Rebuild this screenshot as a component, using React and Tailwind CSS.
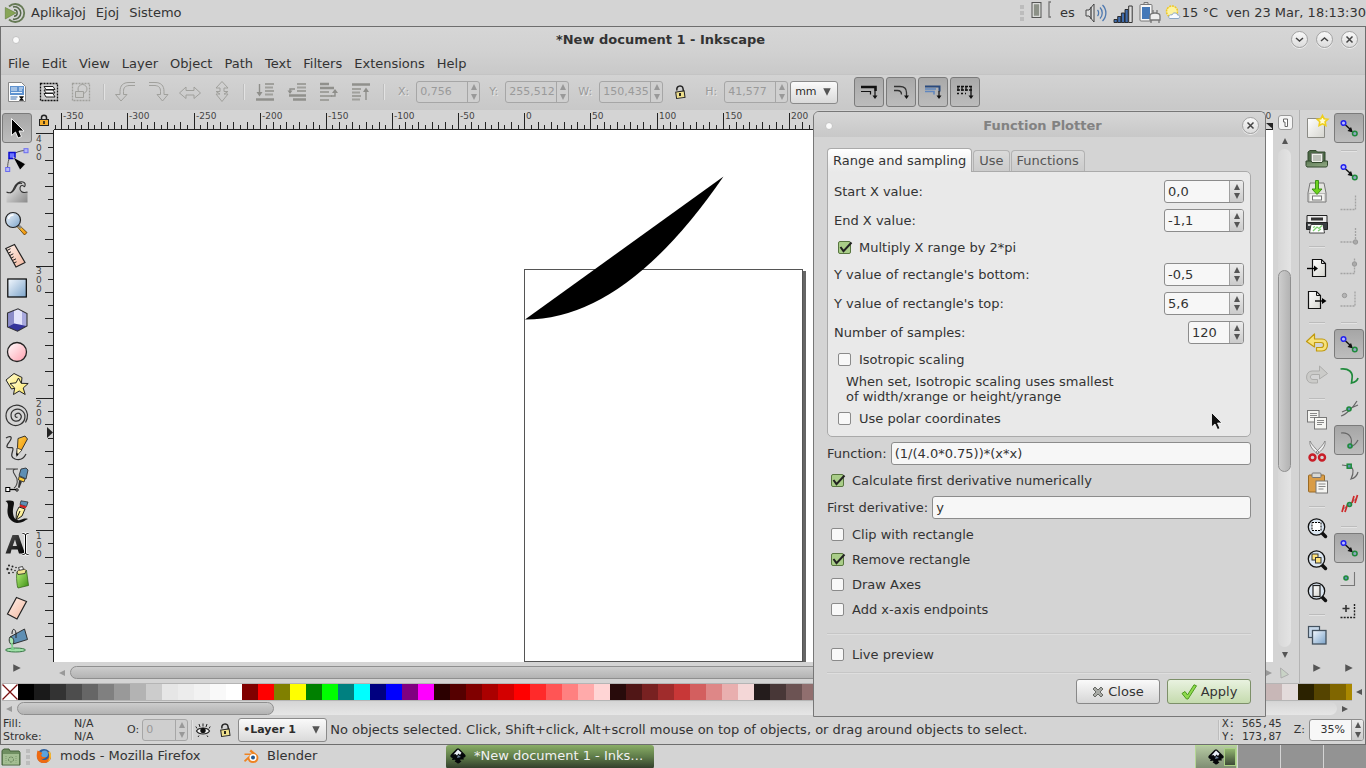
import React from "react";

const cx = (...a) => a.filter(Boolean).join(" ");

function Ico({ children, size = "size-6", box = "0 0 24 24", className = "" }) {
  return (
    <svg viewBox={box} className={cx(size, "shrink-0 overflow-visible", className)} fill="none" aria-hidden="true">
      {children}
    </svg>
  );
}

function Gradients() {
  const g = (id, a, b) => (
    <linearGradient id={id} x1="0" y1="0" x2="1" y2="1">
      <stop offset="0" stopColor={a} />
      <stop offset="1" stopColor={b} />
    </linearGradient>
  );
  return (
    <svg className="absolute size-0" aria-hidden="true">
      <defs>
        {g("gBlue", "#f4f9ff", "#7ba3c9")}
        {g("gPink", "#ffffff", "#ff9fae")}
        {g("gSkin", "#fff2ec", "#f3b79e")}
        {g("gYellow", "#fffde0", "#fbe45a")}
        {g("gOrange", "#ffd24a", "#ee8a00")}
        {g("gGreen", "#b9f27a", "#3c8f14")}
        {g("gGrey", "#f5f5f5", "#8a8a8a")}
        {g("gPaper", "#ffffff", "#d5d5cf")}
        {g("gOlive", "#5e7b57", "#93ab84")}
        {g("gDark", "#555555", "#000000")}
      </defs>
    </svg>
  );
}

/* ---------- toolbox icons ---------- */
const tools = [
  ["Select", <Ico><path d="M6.500 2.500v17l4-3.500 2.500 6 3.500-1.500-2.500-5.500h5z" fill="#000" stroke="#fff" strokeWidth=".9" /></Ico>],
  ["Edit nodes", <Ico><path d="M2.500 20C3 13 4 9 7 7c4-3 8-4 12-4.500" stroke="#555" /><rect x="4" y="4.500" width="6" height="6" fill="#6d74ff" stroke="#0b0bd0" strokeWidth="1.500" /><rect x="19" y=".7" width="4" height="4" fill="#b7b9f5" stroke="#6a6cf0" /><rect x=".7" y="19.500" width="4" height="4" fill="#b7b9f5" stroke="#6a6cf0" /><path d="M8 9l12.500 7-5.500 6z" fill="#000" stroke="#eee" strokeWidth=".6" /></Ico>],
  ["Tweak", <Ico><path d="M1.500 12c4 2 6 0 7.500-4s5-7 9-6c2 .6 3 2.500 1.500 5-1.500-2-4-2-4.500.8-.5 3.200 3 5.700 7.500 4.200v10.500h-21z" fill="url(#gGrey)" /><path d="M1.500 12c4 2 6 0 7.500-4s5-7 9-6c2 .6 3 2.500 1.500 5M22.500 12c-5 1.500-8-1-7.500-4.200.4-2.800 3-3 4.500-.8M5 13c4-1 5-4 6-6.500s3-4 6-3" stroke="#333" strokeWidth="1.100" /></Ico>],
  ["Zoom", <Ico><path d="M14 13l8 7.500-2.500 2.500-7-8z" fill="url(#gOrange)" stroke="#553300" strokeWidth=".8" /><path d="M12.500 12.500l3.500 3.500" stroke="#888" strokeWidth="2.500" /><circle cx="8" cy="8" r="7.500" fill="url(#gBlue)" stroke="#222" strokeWidth="1.200" /><path d="M3.500 7C4 4.500 6 3 8.500 3" stroke="#fff" strokeWidth="1.500" /></Ico>],
  ["Measure", <Ico><path d="M.8 4.500L9.500.5l10.500 18-9 4.500z" fill="url(#gSkin)" stroke="#222" strokeWidth="1.200" /><path d="M2 6.500l3.500-1.800M3.500 9L6 7.800M4.800 11.500l3.500-1.700M6.200 14l2.500-1.200M7.500 16.500l3.500-1.700M9 19l2.500-1.200" stroke="#222" /></Ico>],
  ["Rectangle", <Ico><rect x="2.800" y="3" width="18.500" height="18" fill="url(#gBlue)" stroke="#000" strokeWidth="1.200" /></Ico>],
  ["3D box", <Ico><path d="M2.500 5L13 .8 22 5.500V18l-9.500 5.200L2.500 19z" fill="#c9caee" /><path d="M2.500 5L9 1.800V15.500L2.500 19z" fill="#8b8cc9" /><path d="M9 1.800L13 .8l9 4.700V18L9 15.500z" fill="#e2e3fa" /><path d="M17 3l5 2.500V18l-5-1.200z" fill="#a9aade" /><path d="M2.500 19L9 15.500 22 18l-9.500 5.200z" fill="#34349b" /><path d="M2.500 5L13 .8 22 5.500V18l-9.500 5.200L2.500 19z" stroke="#333" strokeWidth="1.100" /></Ico>],
  ["Ellipse", <Ico><circle cx="12" cy="12" r="9.500" fill="url(#gPink)" stroke="#222" strokeWidth="1.300" /></Ico>],
  ["Star", <Ico><path d="M1 8l8-6.500 8 4-1 9-9.500 2.500z" fill="url(#gYellow)" stroke="#222" /><path d="M13.500 6l2.700 5.300 7 .2-5 4.500 2 6.500-6-3.500-5.700 3.500 1.200-6.500L5 11.500l6-.7z" fill="url(#gYellow)" stroke="#222" /></Ico>],
  ["Spiral", <Ico><path d="M12.500 13c-2 1.200-3.700-1.800-1.300-3.300 3.300-1.900 6.500 2 4.400 5.200-2.500 3.800-8.800 2.800-9.500-2.500C5.300 6.500 11.500 3.500 16 6c5.700 3.200 5 11-.5 14.200C9 23.800 1.300 19.500 1 12 .8 5 7.500 0 14 1.300c4.500 1 8 4.700 8.500 9.200.2 3-.5 5.500-2 8" stroke="#333" strokeWidth="1.200" /></Ico>],
  ["Pencil", <Ico><path d="M1 2c3-2 6-2 5 1s-5 6-4 8 6-1 6 2-4 8 2 10 9-1 11-5" stroke="#333" strokeWidth="1.200" /><path d="M13 2.500L20 0l2.500 3-6 11-5 4.500 1-7z" fill="url(#gOrange)" stroke="#222" strokeWidth=".9" /><path d="M12 12l5 2-5 5.500z" fill="#fff3c4" stroke="#222" strokeWidth=".7" /><path d="M11.500 17l2 1-2 3z" fill="#000" /></Ico>],
  ["Bezier", <Ico><path d="M1 1h12c-9 0-3 5-1 10 1 4-1 8-3 9" stroke="#444" strokeWidth="1.100" /><path d="M16 1l5-1 2 2-2 9-5-2.500-2-1z" fill="#5e8fb4" stroke="#222" strokeWidth=".8" /><path d="M14 8.500l6 2.500-1 3-5.500-2z" fill="#ffcf3c" stroke="#222" strokeWidth=".8" /><path d="M14 12.500l3 1-2.500 6.500-1.500-.5z" fill="#333" /><path d="M5 21.500h7" stroke="#000" strokeWidth="1.300" /><rect x=".8" y="19.500" width="4" height="4" fill="#fff" stroke="#000" /><circle cx="12" cy="22" r="1.200" fill="#fff" stroke="#000" /></Ico>],
  ["Calligraphy", <Ico><path d="M.5 1C6 0 9 .5 9 3c0 3-1.500 6-1 10 .5 5 3 8 7 7 3-1 5-2 8-1-3 1-5 4-11 4C5 22 2 16 2.500 10 2.800 6 4 3 .5 1z" fill="#111" /><path d="M16 .8l7 1.200-1.500 4.500L15 4.500z" fill="#5e8fb4" stroke="#222" strokeWidth=".7" /><path d="M15 4.500l6.500 2-.8 2-6.200-1.500z" fill="#d62020" /><path d="M14 7l6 2-3 7-6 4 .5-8z" fill="url(#gYellow)" stroke="#111" strokeWidth=".9" /><path d="M15 11l-3.500 8" stroke="#111" /></Ico>],
  ["Text", <Ico><path fillRule="evenodd" d="M7.500 3h6l6.500 18.500h-6l-1.300-4H6.500l-1 4H.5zM10 7.500L7.700 14h4.200z" fill="url(#gDark)" /><path d="M17.500 1.500c2 0 3 .5 3 2 0-1.500 1-2 3-2M20.500 3v18M17.500 22.500c2 0 3-.5 3-2 0 1.500 1 2 3 2" stroke="#fff" strokeWidth="2.600" /><path d="M17.500 1.500c2 0 3 .5 3 2 0-1.500 1-2 3-2M20.500 3v18M17.500 22.500c2 0 3-.5 3-2 0 1.500 1 2 3 2" stroke="#000" strokeWidth="1" /></Ico>],
  ["Spray", <Ico><path d="M12 8l9.500-1.500 2 15L13 24c-1-1-2-12-1-16z" fill="url(#gGreen)" stroke="#2b5b10" strokeWidth=".7" /><path d="M12 8c1-3 8-4 9-1.500l-1 3-7 1z" fill="#f2e58f" stroke="#222" strokeWidth=".8" /><path d="M13.500 3.500l4-1 1 3-4 .8z" fill="#f4f4f4" stroke="#222" strokeWidth=".8" /><g fill="#222"><circle cx="4" cy="1.500" r="1" /><circle cx="7.500" cy="2.500" r="1" /><circle cx="11" cy="3.500" r=".8" /><circle cx="2.500" cy="5" r="1.200" /><circle cx="6.500" cy="5.500" r=".9" /><circle cx="10" cy="6.500" r=".8" /><circle cx="4" cy="9" r="1.100" /><circle cx="8" cy="8.500" r=".8" /></g></Ico>],
  ["Eraser", <Ico><path d="M11.500 1.500l10 4-9.500 17.500-9.500-5z" fill="url(#gSkin)" stroke="#222" strokeWidth="1.200" /></Ico>],
  ["Paint bucket", <Ico><ellipse cx="10.500" cy="22" rx="10" ry="2" fill="#9fe0a8" stroke="#2b6b3a" strokeWidth=".9" /><path d="M5 9l14.500-8 3 10.500L8 16z" fill="#5e8fb4" stroke="#222" strokeWidth=".9" /><path d="M5 9c-2 3 0 9 3 7 2-2 0-8-3-7z" fill="#a8e6b0" stroke="#222" strokeWidth=".9" /><path d="M6 15c0 3 1 4 0 7h4c-2-2-2-4-2-6z" fill="#7fd08c" /><path d="M7 6C7 0 10 0 11 5v5" stroke="#222" /></Ico>],
];

/* ---------- command bar icons ---------- */
const Lens = ({ children }) => (
  <Ico>
    <path d="M17 17l3.500 3.500" stroke="#111" strokeWidth="3.500" strokeLinecap="round" />
    <circle cx="11.500" cy="11" r="8.200" fill="#dbe6f1" stroke="#111" strokeWidth="1.300" />
    {children}
  </Ico>
);
const commands = [
  ["New", <Ico><path d="M2.500 2.500h17v19h-17z" fill="url(#gPaper)" stroke="#8a8a85" /><path d="M17.500-.5l1.600 3.200 3.700.5-2.700 2.500.7 3.800-3.300-1.700-3.400 1.700.7-3.800-2.600-2.500 3.600-.5z" fill="#fffbd0" stroke="#efcf1c" strokeWidth="1.600" /></Ico>],
  ["Open", <Ico><path d="M3 4l2-1.500h6L12.500 4H20v12H3z" fill="#4d6947" stroke="#33492e" /><rect x="6.500" y="5.500" width="11" height="10" fill="#eef0ea" stroke="#777" strokeWidth=".6" /><path d="M8 8h8M8 10h8M8 12h8" stroke="#8d938a" /><path d="M1 13h5l1 1.500h10L18 13h4.500v4.500l-1 1.500H2l-1-1.500z" fill="url(#gOlive)" stroke="#33492e" /></Ico>],
  ["Save", <Ico><path d="M5 3h14l2 10v9H3v-9z" fill="#e4e4e0" stroke="#777" /><rect x="4" y="13.500" width="16" height="8" fill="#f1f1ee" stroke="#999" strokeWidth=".6" /><rect x="7.500" y="16" width="9" height="4" fill="#fff" stroke="#777" /><path d="M10.500.5h3v8.500h3.500L12 14.500 7 9h3.500z" fill="#6ed21f" stroke="#348a0c" strokeWidth=".9" /></Ico>],
  ["Print", <Ico><path d="M2 3.500h20v8H2z" fill="#ececec" stroke="#222" /><path d="M6 5.500h12v3H6z" fill="#333" /><path d="M1.500 10.500h21v7h-21z" fill="#3a3f42" stroke="#222" /><path d="M3 12h4v2H3z" fill="#c8c8c8" /><path d="M6 12.500h12l1.500 8.500h-15z" fill="#fff" stroke="#222" strokeWidth=".8" /><path d="M8 19l4-4 2 1.500 3-3M8 15.500l2-1M13 19l3-2" stroke="#7bcf6d" strokeWidth="1.300" /></Ico>],
  null,
  ["Import", <Ico><path d="M7.500 3.500h9l4 4v13h-13z" fill="url(#gPaper)" stroke="#111" strokeWidth="1.200" /><path d="M16.500 3.500v4h4" stroke="#111" /><path d="M2 12.500h8" stroke="#000" strokeWidth="1.400" /><path d="M9 9.500l4 3-4 3z" fill="#000" /></Ico>],
  ["Export", <Ico><path d="M3.500 3.500h8l4 4v13h-12z" fill="url(#gPaper)" stroke="#111" strokeWidth="1.200" /><path d="M11.500 3.500v4h4" stroke="#111" /><path d="M10 13h8" stroke="#000" strokeWidth="1.400" /><path d="M17 10l4.500 3-4.500 3z" fill="#000" /></Ico>],
  null,
  ["Undo", <Ico><path d="M1.500 9.500l8-7.500v5H17c7 0 7.500 12 0 12h-5.500v-3.500H16c3.500 0 3.500-5 0-5H9.500v4.500z" fill="#f8e27a" stroke="#c09a10" strokeWidth="1.200" strokeLinejoin="round" /></Ico>],
  ["Redo", <Ico><path d="M22.500 9.500l-8-7.500v5H7C0 7-.5 19 7 19h5.500v-3.500H8c-3.500 0-3.500-5 0-5h6.500v4.500z" fill="#cbcbc9" stroke="#adadab" strokeLinejoin="round" /></Ico>],
  null,
  ["Copy", <Ico><rect x="2.500" y="2.500" width="11.500" height="11.500" fill="#f5f5f2" stroke="#777" /><path d="M5 5.500h7M5 7.500h7M5 9.500h5" stroke="#888" /><rect x="9.500" y="9.500" width="12" height="11.500" fill="#f5f5f2" stroke="#777" /><path d="M12 12.500h7M12 14.500h7M12 16.500h5" stroke="#888" /></Ico>],
  ["Cut", <Ico><path d="M5 1c-1 5 3 9 7.500 13l1.500-2C10 8 7 5 5 1zM20 1c1 5-3 9-7.500 13L11 12c4-4 7-7 9-11z" fill="#eee" stroke="#777" strokeWidth=".8" /><circle cx="7.500" cy="17.500" r="3" stroke="#c81e28" strokeWidth="2.400" /><circle cx="17" cy="17.500" r="3" stroke="#c81e28" strokeWidth="2.400" /></Ico>],
  ["Paste", <Ico><rect x="3.500" y="3" width="16" height="17" rx="1" fill="#d99c46" stroke="#9a6a24" /><rect x="7" y="1" width="9" height="4.500" rx="1" fill="#d8d8d4" stroke="#777" /><rect x="11" y="9" width="11.500" height="12" fill="#f5f5f2" stroke="#777" /><path d="M13.500 12h7M13.500 14.500h7M13.500 17h5" stroke="#888" /></Ico>],
  null,
  ["Zoom selection", <Lens><rect x="7" y="6.500" width="9" height="8" stroke="#000" strokeDasharray="2 1" fill="#fff" /></Lens>],
  ["Zoom drawing", <Lens><rect x="7" y="6" width="6" height="6" fill="#ffe27a" stroke="#333" /><rect x="10.500" y="9.500" width="5.500" height="5.500" fill="#ffe27a" stroke="#333" /></Lens>],
  ["Zoom page", <Lens><rect x="8" y="5.500" width="7" height="11" fill="url(#gPaper)" stroke="#222" strokeWidth="1.200" /></Lens>],
  null,
  ["Duplicate", <Ico><rect x="3.500" y="2.500" width="11" height="11" fill="#c5d6e8" stroke="#44525f" strokeWidth="1.200" /><rect x="7.500" y="6.500" width="13.500" height="13.500" fill="url(#gBlue)" stroke="#44525f" strokeWidth="1.300" /></Ico>],
];

/* ---------- snap bar icons ---------- */
const SnapNodes = (
  <Ico>
    <path d="M8.500 9l5 4.500" stroke="#111" strokeWidth="1.500" />
    <path d="M16 16.500l-5.500-1.500 3.500-4z" fill="#111" />
    <circle cx="6.500" cy="7" r="2.300" fill="#b9bbff" stroke="#2222ee" strokeWidth="1.500" />
    <circle cx="17.800" cy="17.500" r="2.300" fill="#8fa7c0" stroke="#1f8a3b" strokeWidth="1.500" />
  </Ico>
);
const Snap = ({ children }) => <Ico box="-2 0 24 24">{children}</Ico>;
const Node = ({ x, y }) => <circle cx={x} cy={y} r="2" fill="#5b93b0" stroke="#1f8a3b" strokeWidth="1.600" />;
const snaps = [
  ["Enable snapping", SnapNodes, true],
  null,
  ["Snap bounding boxes", SnapNodes],
  ["Snap bbox edges", <Snap><path d="M1.500 17.500h15V3" stroke="#a3a3a3" strokeDasharray="2 1" strokeWidth="1.300" /></Snap>],
  ["Snap bbox corners", <Snap><path d="M1.500 18h15V3" stroke="#a3a3a3" strokeDasharray="2 1" strokeWidth="1.300" /><circle cx="16.500" cy="18" r="2.200" fill="#aaa" stroke="#999" /></Snap>],
  ["Snap edge midpoints", <Snap><path d="M1.500 17.500h14V2" stroke="#a3a3a3" strokeDasharray="2 1" strokeWidth="1.300" /><circle cx="15.500" cy="8" r="2.200" fill="#aaa" stroke="#999" /></Snap>],
  ["Snap bbox centers", <Snap><path d="M1.500 18h14.500V3" stroke="#a3a3a3" strokeDasharray="2 1" strokeWidth="1.300" /><circle cx="5.500" cy="7.500" r="2.200" fill="#b5b5b5" stroke="#999" /></Snap>],
  null,
  ["Snap nodes", SnapNodes, true],
  ["Snap to paths", <Snap><path d="M1.500 5c8-1 13 3 11.500 10l-.5 4c4-1 6-3 6.500-5" stroke="#1f8a3b" strokeWidth="1.700" /></Snap>],
  ["Snap intersections", <Snap><path d="M2 20c4-1 12-8 16-15M3 16l16-7" stroke="#666" strokeWidth="1.200" /><Node x="10" y="13" /></Snap>],
  ["Snap cusp nodes", <Snap><path d="M2 5c8-1 13 5 9 14 4-1 6-3 8-7" stroke="#666" strokeWidth="1.200" /><Node x="11" y="18" /></Snap>, true],
  ["Snap smooth nodes", <Snap><path d="M3 5l7 1c5 1 5 7 2 13 4-1 6-3 7-7" stroke="#666" strokeWidth="1.200" /><rect x="8.200" y="4.200" width="4" height="4" fill="#5b93b0" stroke="#1f8a3b" strokeWidth="1.500" /></Snap>],
  ["Snap line midpoints", <Snap><path d="M3 18l15-12" stroke="#666" /><path d="M5 13l-2 7M8.500 12.500L6 20M15 4l-2 7M18.500 3L16 11" stroke="#cf2a2a" strokeWidth="1.700" /><Node x="10.500" y="12.500" /></Snap>],
  null,
  ["Snap other points", SnapNodes, true],
  ["Snap object centers", <Snap><path d="M1.500 17.500H15.500V4" stroke="#777" strokeWidth="1.100" /><circle cx="7" cy="10" r="2" fill="#5b93b0" stroke="#1f8a3b" strokeWidth="1.600" /></Snap>],
  ["Snap rotation centers", <Snap><path d="M1.500 17.500h14V4" stroke="#222" strokeDasharray="2 1.200" strokeWidth="1.400" /><path d="M3.500 8.500h7M7 5v7" stroke="#333" strokeWidth="1.600" /></Snap>],
];

/* ---------- small parts ---------- */
const Tri = ({ dir, color = "#555", big }) => {
  const d = { up: "M4 1L7 7H1z", down: "M1 1h6L4 7z", left: "M1 4l6-3v6z", right: "M7 4L1 1v6z" }[dir];
  return <Ico size={big ? "size-2.5" : "size-2"} box="0 0 8 8"><path d={d} fill={color} /></Ico>;
};

function Spin({ id, value, width, disabled, small, label }) {
  return (
    <div
      className={cx(
        "flex shrink-0 rounded-[3px] border",
        width,
        small ? "h-[22px] text-[11px]" : "h-[23px] text-[13px]",
        disabled ? "border-[#a6a6a6] bg-[#cfcfcf] text-[#9a9a9a]" : "border-[#8c8c8c] bg-[#f7f7f7] text-[#333]"
      )}
    >
      <input
        id={id}
        aria-label={label}
        defaultValue={value}
        disabled={disabled}
        className={cx("min-w-0 flex-1 bg-transparent outline-none", id === "zoom" ? "pr-1.5 text-right" : "pl-[3px]")}
      />
      <div className={cx("flex shrink-0 flex-col items-center justify-evenly rounded-r-[2px] border-l", small ? "w-3" : "w-[14px]", disabled ? "border-[#a6a6a6]" : "border-[#a0a0a0] bg-linear-to-b from-[#ececec] to-[#cbcbcb]")}>
        <button type="button" disabled={disabled} aria-label="Increase"><Tri dir="up" color={disabled ? "#999" : "#555"} /></button>
        <button type="button" disabled={disabled} aria-label="Decrease"><Tri dir="down" color={disabled ? "#999" : "#555"} /></button>
      </div>
    </div>
  );
}

function Check({ id, label, on }) {
  return (
    <label htmlFor={id} className="flex h-[19px] items-center gap-2 pl-1">
      <span className="grid size-[13px] shrink-0 place-items-center">
        <input
          id={id}
          type="checkbox"
          defaultChecked={on}
          className="peer col-start-1 row-start-1 size-[13px] appearance-none rounded-[2px] border border-[#8a8a8a] bg-[#f8f8f8] checked:border-[#58763f] checked:bg-[#a9cd88]"
        />
        <svg viewBox="0 0 13 13" className="pointer-events-none col-start-1 row-start-1 hidden size-[13px] overflow-visible peer-checked:block" fill="none">
          <path d="M2.500 6l3 4.200L13.500 1.500" stroke="#222" strokeWidth="2" />
        </svg>
      </span>
      {label}
    </label>
  );
}

function SpinRow({ id, label, value, width = "w-20" }) {
  return (
    <div className="flex h-[23px] items-center justify-between">
      <label htmlFor={id}>{label}</label>
      <Spin id={id} value={value} width={width} />
    </div>
  );
}

const Round = ({ label, children }) => (
  <button type="button" aria-label={label} className="grid size-[17px] place-items-center rounded-full border border-[#a2a2a2] bg-linear-to-b from-[#f8f8f8] to-[#dcdcdc] shadow-[0_1px_0_#eee]">
    <svg viewBox="0 0 9 9" className="size-[9px]" fill="none" stroke="#444" strokeWidth="1.500">{children}</svg>
  </button>
);
const Dot = () => <span className="size-2 rounded-full border border-[#c2c2c2] bg-[#fafafa]" />;
const VSep = ({ className }) => <span className={cx("w-px shrink-0 bg-[#bdbdbd] shadow-[1px_0_0_#e2e2e2]", className)} />;

const Padlock = ({ open }) =>
  open ? (
    <Ico size="size-3.5" box="0 0 14 14">
      <path d="M4 5.500C2.500.5 9.500-.5 10 3.500l.5 3" stroke="#222" strokeWidth="1.500" />
      <rect x="3" y="6.500" width="8.500" height="6.500" fill="#eedf8c" stroke="#222" transform="rotate(-8 7 9)" />
      <path d="M7 8v3" stroke="#111" strokeWidth="1.800" />
    </Ico>
  ) : (
    <Ico size="size-3" box="0 0 12 12">
      <path d="M3.500 6V3.500c0-3 5-3 5 0V6" stroke="#222" strokeWidth="1.500" />
      <rect x="1.500" y="5.500" width="9" height="6" fill="#f5ad2a" stroke="#222" />
      <path d="M6 7v3" stroke="#111" strokeWidth="1.500" />
    </Ico>
  );

const Inkscape = () => (
  <Ico size="size-4" box="0 0 16 16">
    <path d="M8 .5c1 0 1.500.6 2 1.100l5 5c1.500 1.700.5 2.700-1.500 3.200-1 .4 1 .8.500 1.400-1 .8-4-.2-4 1 1 .8 2 1 1 1.600-1.200.5-1 1.400-3 1.700-1.500-.2-1-1.500-3-1.800-.8-.5.6-1 .5-1.500-.5-.8-3 .2-3.500-.8 0-.6 1.200-.7.5-1.300C.8 9.700-.5 8.400 1 6.600l5-5C6.500 1.100 7 .5 8 .5z" fill="#05070a" />
    <path d="M8 1.500l3.500 3.300L10 7 8.500 5.500 7 7.500 5.500 6 3.500 6.500z" fill="#e8eef6" />
    <path d="M8 7l3 2-4 1z" fill="#6d8098" />
  </Ico>
);

/* ---------- top toolbar ---------- */
const G = "#a0a09c";
const optionIcons = [
  [
    ["Select all", <Ico><path d="M3.500 2.500h13l4 4v15h-17z" fill="#fdfdfd" stroke="#888" /><rect x="5" y="6" width="14" height="9" fill="#5f92cf" /><path d="M6 8h6M6 10h6M6 12.500h11M14 8h4M14 10h3" stroke="#eaf2fb" /><path d="M5.500 17h7M5.500 19h6" stroke="#3d6fae" /><path d="M14 16h5v1l-1.500 1.500L19 20v1h-5v-1l1.500-1.500L14 17z" fill="#111" stroke="#fff" strokeWidth=".5" /></Ico>],
    ["Select in all layers", <Ico><rect x="3.500" y="3.500" width="17" height="17" stroke="#111" strokeDasharray="2 1" strokeWidth="1.300" /><path d="M7 6.500h9l2 3H9zM7 10h9l2 3H9zM7 13.500h9l2 3.500H9z" fill="#fff" stroke="#222" /></Ico>],
    ["Deselect", <Ico><rect x="3.500" y="3.500" width="17" height="17" stroke={G} strokeDasharray="2 1" strokeWidth="1.300" /><circle cx="13.500" cy="9" r="4.500" stroke={G} /><path d="M6.500 11.500h8v6h-8z" stroke={G} fill="#cacac8" /></Ico>],
  ],
  [
    ["Rotate left", <Ico><path d="M21 2.500h-6c-6 0-9 3-9 9v3H1.500L7 21l6-6.500H9.500v-3c0-4 1.500-5.500 5.500-6h6" stroke={G} strokeLinejoin="round" /></Ico>],
    ["Rotate right", <Ico><path d="M3 2.500h6c6 0 9 3 9 9v3h4L16.500 21 11 14.500h3.500v-3c0-4-1.500-5.500-5.500-6H3" stroke={G} strokeLinejoin="round" /></Ico>],
    ["Flip horizontal", <Ico><path d="M1.500 13L8 7v3.500h8V7l6.500 6-6.500 5.500V15H8v3.500z" stroke={G} strokeLinejoin="round" /></Ico>],
    ["Flip vertical", <Ico><path d="M12 1.500L18 8h-4v3.500h4L14 14h4l-6 7.500L6 14h4l-4-2.500h4V8H6z" stroke={G} strokeLinejoin="round" /></Ico>],
  ],
  [
    ["Lower to bottom", <Ico><path d="M12 4h9M12 7.500h8M12 11h9M12 14.500h8" stroke={G} strokeWidth="2.200" /><path d="M3 19.500h18" stroke="#90908c" strokeWidth="2.500" /><path d="M6.500 4v10" stroke="#8e8e8a" strokeWidth="1.400" /><path d="M3.500 12h6l-3 4.500z" fill="#8e8e8a" /></Ico>],
    ["Lower", <Ico><path d="M12 4h9M12 7.500h9M12 11h9" stroke={G} strokeWidth="2" /><path d="M4 15.500h17M8 19.500h13" stroke="#90908c" strokeWidth="2.300" /><path d="M10 9H5v4" stroke="#8e8e8a" strokeWidth="1.400" /><path d="M2.500 10.500h5L5 14z" fill="#8e8e8a" /></Ico>],
    ["Raise", <Ico><path d="M3 4h9M3 8h14" stroke="#90908c" strokeWidth="2.300" /><path d="M3 12h9M3 16h12M3 20h9" stroke={G} strokeWidth="2" /><path d="M14 16h4v-4" stroke="#8e8e8a" strokeWidth="1.400" /><path d="M15 13h6l-3-4z" fill="#8e8e8a" /></Ico>],
    ["Raise to top", <Ico><path d="M3 4.500h18" stroke="#90908c" strokeWidth="2.500" /><path d="M3 9h9M3 12.500h8M3 16h9M3 19.500h8" stroke={G} strokeWidth="2.200" /><path d="M17 20V10" stroke="#8e8e8a" strokeWidth="1.400" /><path d="M14 12h6l-3-4.500z" fill="#8e8e8a" /></Ico>],
  ],
];
const T = ({ children }) => <Ico size="size-4" box="0 0 16 16">{children}</Ico>;
const toggles = [
  ["Scale stroke width", <T><path d="M0 3h14.500v4" stroke="#111" strokeWidth="2.600" /><path d="M0 7.500h9.500v3" stroke="#111" strokeWidth="1.200" /><path d="M14 7v6" stroke="#111" strokeWidth="1.200" /><path d="M11.500 11.500h5L14 15z" fill="#111" /></T>],
  ["Scale corners", <T><path d="M1 2.500h6c5 0 6.500 2.500 6.500 6V12" stroke="#333" strokeWidth="1.300" /><path d="M1 6.500h3.500c3 0 4 1.500 4 4" stroke="#333" strokeWidth="1.300" /><path d="M11 11.500h5L13.500 15z" fill="#111" /></T>],
  ["Move gradients", <T><path d="M0 2.500h14.500v5" stroke="#2a4a7d" strokeWidth="2" /><path d="M0 5h11M0 7.500h9v3" stroke="#5f86bf" strokeWidth="1.500" /><path d="M14 7v6" stroke="#111" strokeWidth="1.200" /><path d="M11.500 11.500h5L14 15z" fill="#111" /></T>],
  ["Move patterns", <T><path d="M0 2.500h15M0 6h15" stroke="#111" strokeWidth="1.400" strokeDasharray="3 1" /><path d="M1 2v5M5 2v5M9 2v5M14 2v11" stroke="#111" strokeWidth="1.300" /><path d="M0 9.500h9" stroke="#111" strokeWidth="1.500" strokeDasharray="2 2" /><path d="M11.500 11.500h5L14 15z" fill="#111" /></T>],
];

function Field({ id, label, value }) {
  return (
    <div className="flex items-center gap-[7px]">
      <label htmlFor={id} className="text-[#9a9a9a] [text-shadow:1px_1px_0_#e6e6e6]">{label}</label>
      <Spin id={id} value={value} width="w-16" small disabled />
    </div>
  );
}

function OptionsBar() {
  return (
    <div className="flex h-9 shrink-0 items-center bg-linear-to-b from-[#d3d3d3] to-[#c8c8c8] text-[11px] shadow-[inset_0_1px_0_#c4c4c4]">
      {optionIcons.map((grp, i) => (
        <React.Fragment key={i}>
          {i > 0 && <VSep className={cx("h-4", i === 1 ? "mx-[6px]" : "mx-[5px]")} />}
          {grp.map(([n, ic]) => (
            <button key={n} type="button" aria-label={n} className="grid h-8 w-8 place-items-center">{ic}</button>
          ))}
        </React.Fragment>
      ))}
      <VSep className="mx-[6px] h-4" />
      <div className="ml-2 flex items-center gap-[9px]">
        <Field id="x" label="X:" value="0,756" />
        <Field id="y" label="Y:" value="255,512" />
        <Field id="w" label="W:" value="150,435" />
      </div>
      <button type="button" aria-label="Lock ratio" className="mr-[18px] ml-2.5"><Padlock open /></button>
      <Field id="h" label="H:" value="41,577" />
      <Combo label="Unit" value="mm" className="ml-0.5 h-[23px] w-12" />
      <div className="ml-4 flex gap-0.5">
        {toggles.map(([n, ic]) => (
          <button key={n} type="button" aria-label={n} aria-pressed="true" className="grid size-[30px] place-items-center rounded-[3px] border border-[#7b7b7b] bg-linear-to-b from-[#a9a9a9] to-[#bcbcbc]">{ic}</button>
        ))}
      </div>
    </div>
  );
}

function Combo({ label, value, className, bold }) {
  return (
    <div className={cx("grid shrink-0 items-center rounded-[3px] border border-[#8a8a8a] bg-linear-to-b from-[#fafafa] to-[#dadada]", className)}>
      <select aria-label={label} className={cx("col-start-1 row-start-1 h-full w-full appearance-none bg-transparent pl-1 text-[11px] text-[#2d2d2d] outline-none", bold && "font-bold")}>
        <option>{value}</option>
      </select>
      <span className="pointer-events-none col-start-1 row-start-1 mr-[5px] justify-self-end"><Tri dir="down" big /></span>
    </div>
  );
}

/* ---------- rulers and canvas ---------- */
const MAJOR = 66.14;
const rulerLabels = [-7, -6, -5, -4, -3, -2, -1, 0, 1, 2, 3, 4, 11];
function HRuler() {
  const ticks = [];
  for (let i = -71; i <= 115; i++) {
    const x = Math.round(470.3 + (i * MAJOR) / 10) + 0.5;
    const h = i % 10 === 0 ? 17 : i % 2 === 0 ? 8 : 5;
    ticks.push(<path key={i} d={`M${x} 20v${-h}`} stroke="#222" />);
  }
  return (
    <svg className="h-5 min-w-0 flex-1" aria-label="Horizontal ruler">
      {ticks}
      {rulerLabels.map((n) => (
        <text key={n} x={Math.round(470.3 + n * MAJOR) + 2} y="9" fontSize="9" fill="#444">{n * 50}</text>
      ))}
      <path d="M0 19.500h1400" stroke="#222" />
      <path d="M1212 13h7v6z" fill="#222" />
    </svg>
  );
}
function VRuler() {
  const ticks = [];
  for (let i = 0; i <= 40; i++) {
    const y = Math.round(3.300 + (i * MAJOR) / 5) + 0.5;
    const w = i % 10 === 0 ? 17 : i % 2 === 0 ? 8 : 5;
    ticks.push(<path key={i} d={`M19 ${y}h${-w}`} stroke="#222" />);
  }
  return (
    <svg className="w-5 shrink-0" aria-label="Vertical ruler">
      {ticks}
      {[400, 300, 200, 100].map((v, k) =>
        String(v).split("").map((c, j) => (
          <text key={`${v}${j}`} x="2" y={Math.round(12 + k * 132.3 + j * 9)} fontSize="9" fill="#444">{c}</text>
        ))
      )}
      <path d="M19.500 0v532" stroke="#222" />
      <path d="M13 297l6 5.500-6 5.500z" fill="#222" />
    </svg>
  );
}

function Editor() {
  return (
    <div className="flex min-w-0 flex-1 flex-col border-r border-[#b4b4b4]">
      <div className="flex h-5 shrink-0">
        <div className="flex w-5 shrink-0 items-center justify-center"><Padlock /></div>
        <HRuler />
        <div className="flex w-[26px] shrink-0 items-center justify-center pt-1 pr-0.5">
          <button type="button" aria-label="Zoom to page" className="grid size-[15px] place-items-center rounded-[3px] border border-[#999] bg-[#f4f4f4]">
            <svg viewBox="0 0 9 9" className="size-[9px]"><path d="M2.500 1h4v7.500h-2.500V4h-1.500z" fill="#fff" stroke="#666" /></svg>
          </button>
        </div>
      </div>
      <div className="flex min-h-0 flex-1">
        <VRuler />
        <div className="relative min-w-0 flex-1 bg-white">
          <svg className="absolute inset-0 size-full" aria-label="Drawing">
            <rect x="749" y="141" width="3" height="391" fill="#666" />
            <rect x="470.500" y="139.500" width="278" height="392" fill="#fff" stroke="#555" />
            <path d="M471 189.500L669.500 46.500Q571 190 471 189.500z" fill="#000" />
          </svg>
        </div>
        <div className="flex w-[26px] shrink-0 flex-col items-center pt-[7px] pr-[3px] pb-[3px]">
          <Tri dir="up" />
          <div className="my-1 flex w-[13px] flex-1 flex-col rounded-full bg-linear-to-r from-[#d8d8d8] to-[#e4e4e4]">
            <div className="mt-[121px] h-[202px] rounded-full border border-[#8f8f8f] bg-linear-to-r from-[#cdcdcd] to-[#b3b3b3]" />
          </div>
          <Tri dir="down" />
        </div>
      </div>
      <div className="flex h-[21px] shrink-0 items-center pl-6">
        <Tri dir="left" color="#999" />
        <div className="mr-8 ml-1 h-[13px] flex-1 rounded-full border border-[#8f8f8f] bg-linear-to-b from-[#cdcdcd] to-[#b3b3b3]" />
        <Tri dir="right" color="#999" />
        <span className="grid w-[26px] place-items-center pr-1">
          <Ico size="size-3" box="0 0 12 12"><path d="M2.500 1l8 6.500L3 11z" fill="#c9d3c6" stroke="#adadad" /></Ico>
        </span>
      </div>
    </div>
  );
}

function Column({ items, label }) {
  return (
    <div className="flex w-8 shrink-0 flex-col items-center pt-[2px]" role="toolbar" aria-label={label}>
      {items.map((it, i) =>
        it ? (
          <div key={i} className="grid h-8 w-8 place-items-center">
            <button type="button" aria-label={it[0]} className={cx("grid size-[30px] place-items-center rounded-[3px]", it[2] && "border border-[#7b7b7b] bg-linear-to-b from-[#a6a6a6] to-[#bdbdbd]")}>{it[1]}</button>
          </div>
        ) : (
          <div key={i} className="flex h-3 items-center"><span className="h-px w-4 bg-[#bcbcbc] shadow-[0_1px_0_#e3e3e3]" /></div>
        )
      )}
      <div className="mt-auto mb-[3px] grid h-6 place-items-center"><Tri dir="right" big /></div>
    </div>
  );
}

/* ---------- palette ---------- */
const palette =
  "000000 1a1a1a 333333 4d4d4d 666666 808080 999999 b3b3b3 cccccc e6e6e6 ececec f2f2f2 f9f9f9 ffffff 800000 ff0000 808000 ffff00 008000 00ff00 008080 00ffff 000080 0000ff 800080 ff00ff 2b0000 550000 800000 aa0000 d40000 ff0000 ff2a2a ff5555 ff8080 ffaaaa ffd5d5 280b0b 501616 782121 a02c2c c83737 d35f5f de8787 e9afaf f4d7d7 241c1c 483737 6c5353 916f6f ac9393 c8b7b7 e3dbdb 2b1100 552200 803300 aa4400 d45500 ff6600 ff7f2a ff9955 ffb380 ffccaa ffe6d5 28170b 502d16 784421 a05a2c c87137 d38d5f deaa87 e9c6af f4e3d7 241f1c 483e37 6c5d53 917c6f ac9d93 c8b7b7 e3dbdb 2b2200 554400 806600 aa8800 d4aa00 ffcc00".split(" ");

function Palette() {
  return (
    <div className="shrink-0">
      <div className="flex h-[18px] items-center pl-px">
        <div className="flex min-w-0 flex-1 overflow-hidden border-y border-[#b5b5b5]">
          <button type="button" aria-label="No paint" className="size-4 shrink-0 bg-white">
            <svg viewBox="0 0 16 16" className="size-4"><path d="M.5.5l15 15M15.500.5l-15 15" stroke="#7a1010" strokeWidth="1.300" /></svg>
          </button>
          {palette.map((c, i) => (
            <button key={i} type="button" aria-label={`#${c}`} className="size-4 shrink-0" style={{ background: `#${c}` }} />
          ))}
        </div>
        <span className="grid w-[13px] place-items-center"><Tri dir="left" /></span>
      </div>
      <div className="flex h-[15px] items-center pr-4 pl-1">
        <Tri dir="left" color="#999" />
        <div className="mx-1 flex h-[13px] flex-1 rounded-full bg-linear-to-b from-[#d6d6d6] to-[#e6e6e6]">
          <div className="w-[257px] rounded-full border border-[#8f8f8f] bg-linear-to-b from-[#cdcdcd] to-[#b3b3b3]" />
        </div>
        <Tri dir="right" />
      </div>
    </div>
  );
}

function StatusBar() {
  return (
    <div className="flex h-7 shrink-0 items-center pr-px pl-0.5 text-[11px] text-[#333]">
      <div className="grid w-[122px] grid-cols-[71px_auto] leading-[13px]">
        <span>Fill:</span><span>N/A</span>
        <span>Stroke:</span><span>N/A</span>
      </div>
      <label htmlFor="opacity" className="mr-[3px] ml-[2px]">O:</label>
      <Spin id="opacity" value="0" width="w-[46px]" small disabled />
      <VSep className="mx-[3px] h-5" />
      <button type="button" aria-label="Toggle layer visibility">
        <Ico size="size-4" box="0 0 16 16">
          <path d="M1.500 9C4 5 12 5 14.500 9 12 13 4 13 1.500 9z" fill="#eee" stroke="#222" strokeWidth="1.200" />
          <circle cx="8" cy="8.500" r="2.700" fill="#111" />
          <path d="M2 6.500L.8 4.500M5 5L4 2M8 4.500v-3M11 5l1-3M14 6.500l1.200-2M4 13.500l-1 1.500M12 13.500l1 1.500" stroke="#222" />
        </Ico>
      </button>
      <button type="button" aria-label="Lock layer" className="mr-1.5 ml-[7px]"><Padlock open /></button>
      <Combo label="Layer" value="•Layer 1" bold className="h-6 w-[89px]" />
      <span className="min-w-0 flex-1 truncate pl-[3px] text-[13px]">
        No objects selected. Click, Shift+click, Alt+scroll mouse on top of objects, or drag around objects to select.
      </span>
      <VSep className="h-5" />
      <div className="ml-[3px] grid grid-cols-[20px_auto] font-['DejaVu_Sans_Mono',monospace] leading-[13px]">
        <span>X:</span><span>565,45</span>
        <span>Y:</span><span>173,87</span>
      </div>
      <label htmlFor="zoom" className="mr-1 ml-3">Z:</label>
      <Spin id="zoom" value="35%" width="w-[55px]" small />
    </div>
  );
}

/* ---------- dialog ---------- */
function Dialog() {
  const field = "h-[23px] min-w-0 flex-1 rounded-[3px] border border-[#8c8c8c] bg-[#f7f7f7] px-[3px] outline-none";
  const idleTab = "h-[21px] rounded-t-[4px] border border-b-0 border-[#b2b2b2] bg-linear-to-b from-[#dadada] to-[#cbcbcb] px-[5px] text-[#555]";
  return (
    <section role="dialog" aria-labelledby="dlg-title" className="absolute top-[111px] right-[100px] w-[453px] rounded-t-[6px] border border-[#777] bg-[#d4d4d4] text-[#333]">
      <header className="flex h-[25px] items-center rounded-t-[5px] bg-linear-to-b from-[#d6d6d6] to-[#c8c8c8] pt-0.5 pr-1.5 pl-[11px]">
        <Dot />
        <h2 id="dlg-title" className="flex-1 pl-2.5 text-center font-bold text-[#828282]">Function Plotter</h2>
        <Round label="Close window"><path d="M1.500 1.500l6 6M7.500 1.500l-6 6" /></Round>
      </header>
      <div className="flex flex-col gap-1.5 pt-[11px] pr-3.5 pb-3 pl-[13px]">
        <div className="-mb-px">
          <div role="tablist" className="flex items-end gap-px">
            <button type="button" role="tab" aria-selected="true" className="relative z-10 -mb-px h-6 rounded-t-[4px] border border-b-0 border-[#aaa] bg-linear-to-b from-white to-[#e9e9e9] px-[5px]">Range and sampling</button>
            <button type="button" role="tab" aria-selected="false" className={idleTab}>Use</button>
            <button type="button" role="tab" aria-selected="false" className={idleTab}>Functions</button>
          </div>
          <div role="tabpanel" className="flex flex-col gap-1.5 rounded-[5px] rounded-tl-none border border-[#aaa] bg-[#e9e9e9] px-[6px] py-2">
            <SpinRow id="sx" label="Start X value:" value="0,0" />
            <SpinRow id="ex" label="End X value:" value="-1,1" />
            <Check id="mul" label="Multiply X range by 2*pi" on />
            <SpinRow id="yb" label="Y value of rectangle's bottom:" value="-0,5" />
            <SpinRow id="yt" label="Y value of rectangle's top:" value="5,6" />
            <SpinRow id="ns" label="Number of samples:" value="120" width="w-14" />
            <div className="flex flex-col gap-[5px]">
              <Check id="iso" label="Isotropic scaling" />
              <p className="pl-3 leading-[15px]">When set, Isotropic scaling uses smallest<br />of width/xrange or height/yrange</p>
              <Check id="polar" label="Use polar coordinates" />
            </div>
          </div>
        </div>
        <div className="flex h-[23px] items-center gap-1">
          <label htmlFor="fn">Function:</label>
          <input id="fn" defaultValue="(1/(4.0*0.75))*(x*x)" className={field} />
        </div>
        <Check id="calc" label="Calculate first derivative numerically" on />
        <div className="flex h-[23px] items-center gap-1">
          <label htmlFor="fd">First derivative:</label>
          <input id="fd" defaultValue="y" className={field} />
        </div>
        <Check id="clip" label="Clip with rectangle" />
        <Check id="rem" label="Remove rectangle" on />
        <Check id="axes" label="Draw Axes" />
        <Check id="endp" label="Add x-axis endpoints" />
        <div className="mt-2 mb-[5px] h-px bg-[#c6c6c6] shadow-[0_1px_0_#dedede]" />
        <Check id="live" label="Live preview" />
        <div className="mt-0.5 h-px bg-[#c6c6c6] shadow-[0_1px_0_#dedede]" />
        <div className="flex justify-end gap-[7px]">
          <button type="button" className="flex h-[25px] w-[84px] items-center justify-center gap-1 rounded-[3px] border border-[#888] bg-linear-to-b from-[#fafafa] to-[#d6d6d6]">
            <Ico size="size-3" box="0 0 12 12"><path d="M3 1l3 3 3-3 2 2-3 3 3 3-2 2-3-3-3 3-2-2 3-3-3-3z" fill="#a8aaa5" stroke="#666864" /></Ico>
            Close
          </button>
          <button type="button" className="flex h-[25px] w-[84px] items-center justify-center gap-1 rounded-[3px] border border-[#7d9069] bg-linear-to-b from-[#e9f2e0] to-[#c5dbae]">
            <Ico size="size-4" box="0 0 16 16"><path d="M1 9.500L4 7.500l2.500 3.500L13 .8l2.500 1L7 15H5.500z" fill="#8fdb4e" stroke="#4d9a1f" strokeLinejoin="round" /></Ico>
            Apply
          </button>
        </div>
      </div>
      <svg viewBox="0 0 12 18" className="absolute top-[300px] left-[397px] h-[18px] w-3 overflow-visible" aria-hidden="true">
        <path d="M.5.5v14.500l3.500-3 2.500 5.500 2.500-1-2.500-5.500H11z" fill="#111" stroke="#fff" strokeWidth=".8" />
      </svg>
    </section>
  );
}

/* ---------- desktop panels ---------- */
const Grip = () => (
  <span className="flex flex-col gap-0.5">
    {[0, 1, 2].map((i) => <span key={i} className="size-1 bg-[#bcbcbc]" />)}
  </span>
);

function TopPanel() {
  return (
    <header className="flex h-[26px] shrink-0 items-center pl-[5px]">
      <Ico size="size-5" box="0 0 20 20">
        <path d="M4 3.500a9 9 0 110 13" stroke="#667a55" strokeWidth="1.800" />
        <path d="M8 4a6.200 6.200 0 110 12" stroke="#56684a" strokeWidth="1.500" />
        <path d="M9 6.800a3.200 3.200 0 010 6.400" stroke="#56684a" strokeWidth="1.500" />
        <path d="M.3 4.500L11 10 .3 16z" fill="#87a556" stroke="#5e7a35" strokeWidth=".6" />
      </Ico>
      <nav className="ml-1.5 flex flex-1 gap-2.5">
        <button type="button">Aplikaĵoj</button>
        <button type="button">Ejoj</button>
        <button type="button">Sistemo</button>
      </nav>
      <Grip />
      <div className="flex items-center">
        <Ico size="size-5" className="ml-[7px]" box="0 0 20 20">
          <rect x="1" y="-.5" width="9" height="15" fill="#8c9187" stroke="#555" /><rect x="2.200" y=".7" width="6.600" height="12.600" stroke="#eee" />
          <path d="M20-1h-2v15h2" stroke="#777" strokeWidth="1.300" />
        </Ico>
        <span className="ml-[9px]">es</span>
        <Ico size="h-5 w-[22px]" className="ml-2.5" box="0 0 22 20">
          <path d="M1 7h3l5-6v18l-5-6H1z" fill="#ddd" stroke="#444" /><path d="M6 4v12" stroke="#444" strokeWidth="1.300" />
          <path d="M12.500 7c1.500 1.500 1.500 4.500 0 6M15 4.500c3 3 3 8 0 11M17.500 2c4.500 4.500 4.500 11.500 0 16" stroke="#4e79b0" strokeWidth="1.300" />
        </Ico>
        <Ico size="size-5" className="ml-1.5" box="0 0 20 20">
          <g fill="#3f6cae" stroke="#222" strokeWidth=".9"><path d="M1 16.500h3.200v3H1zM4.700 13.500h3.200v6H4.700zM8.400 10h3.200v9.500H8.400zM12 6.500h3.200v13H12z" /><path d="M15.700 3h3.500v16.500h-3.500z" fill="#ddd" /></g>
        </Ico>
        <Ico size="h-5 w-[22px]" className="ml-1.5" box="0 0 22 20">
          <path d="M5-.5h4v2H5z" fill="#ddd" stroke="#777" /><rect x="1" y="1.500" width="12" height="16.500" rx="1" fill="#f7f7f7" stroke="#777" /><rect x="3" y="4" width="8" height="12" fill="#4478b8" />
          <path d="M11 13c0-2 2-3 5-3s5 1 5 3v4H11zM12 17v3M20 17v3M14 10V7M18 10V7" fill="#eee" stroke="#777" strokeWidth="1.300" />
        </Ico>
        <Ico size="size-4" className="ml-1" box="0 0 16 16">
          <circle cx="7" cy="6.500" r="5.500" fill="#fdf3a0" stroke="#efc724" strokeWidth="1.500" strokeDasharray="2 .8" />
          <path d="M4.500 13.500c-2-2 .5-4.500 2.500-3.500.5-3 5.500-2.500 5.500 0 3 0 3 3.500.5 3.500z" fill="#f8fbff" stroke="#8aa6c4" />
        </Ico>
        <span className="ml-px">15 °C</span>
        <span className="ml-2">ven 23 Mar, 18:13:30</span>
      </div>
    </header>
  );
}

function Taskbar() {
  return (
    <footer className="flex h-6 shrink-0 items-center overflow-hidden pl-px">
      <Ico size="size-5" box="0 0 20 20">
        <path d="M1 3.500L3 2h5l1 2h9l1 1.500V18H1z" fill="#6f8f61" stroke="#45603a" /><path d="M2 7h16v10.500H2z" fill="#a3be92" /><circle cx="10" cy="12.500" r="2.500" stroke="#5c7a50" strokeDasharray="2 1" /><path d="M5 9v6.500M15 9v6.500" stroke="#7d9a70" strokeDasharray="1 1" />
      </Ico>
      <span className="ml-[5px]"><Grip /></span>
      <a href="#firefox" className="ml-1.5 flex h-6 w-[207px] items-center gap-2 pb-0.5">
        <Ico size="size-4" box="0 0 16 16">
          <circle cx="8" cy="8" r="7" fill="#2b5d9c" /><circle cx="8.500" cy="6" r="3.500" fill="#5ba3dd" />
          <path d="M1.500 2.500C3 3 4 3.500 5 4.500c1 0 1.500.5 1 1.500-1 .5-1 1-.5 2 1 1.500 3 1 4.500 1-1 2-4 2.500-5 1.500 3 3 8 1.500 8-3 0-2-.5-3-1.500-4.500 2.500 1.500 4 4 3.500 6.500-1 4-4.500 6-8 5.500C2 14.500.3 10 .8 6.500 1 5 1.200 3.500 1.500 2.500z" fill="#ee6a12" />
          <path d="M14 3.500c2 3.500 1 9-2.500 11 2-3 2.500-7 1-10z" fill="#f9bb2d" />
        </Ico>
        mods - Mozilla Firefox
      </a>
      <a href="#blender" className="flex h-6 w-[203px] items-center gap-2 pb-0.5">
        <Ico size="size-4" box="0 0 16 16">
          <path d="M1 12.500L7 7H1.500V5.500H9L6.500 3.500l1.500-2 6 5C17 9.500 15 15 10 15c-3 0-4.500-1.500-5-3.500L2 14z" fill="#ee8322" /><circle cx="10" cy="9.500" r="3.500" fill="#fff" /><circle cx="10" cy="9.500" r="2" fill="#22578f" />
        </Ico>
        Blender
      </a>
      <a href="#inkscape" className="flex h-6 w-[208px] items-center gap-2 rounded-[3px] bg-linear-to-b from-[#8aae66] via-[#5e7b49] to-[#303c2a] pb-0.5 pl-1 text-[#f1f1f1]">
        <Inkscape />
        *New document 1 - Inks…
      </a>
      <div className="ml-auto flex h-6 w-[171px] gap-px bg-[#d4d4d4]">
        <button type="button" aria-label="Workspace 1" className="flex w-[42px] items-center justify-end border border-[#b5d795] bg-linear-to-b from-[#b5c9a2] to-[#7f8e73]">
          <Inkscape />
          <span className="h-[18px] w-3 border border-[#a8cf84] bg-linear-to-b from-[#91b56f] to-[#3f4c37]" />
        </button>
        {[2, 3, 4].map((n) => <button key={n} type="button" aria-label={`Workspace ${n}`} className="w-[42px] bg-[#939393]" />)}
      </div>
    </footer>
  );
}

export default function App() {
  return (
    <div className="relative flex min-h-screen flex-col overflow-hidden bg-[#d4d4d4] font-['DejaVu_Sans','Liberation_Sans',sans-serif] text-[13px] leading-4 text-[#333]">
      <Gradients />
      <TopPanel />
      <main className="flex flex-1 flex-col border border-[#6e6e6e]">
        <div className="flex h-[25px] shrink-0 items-center gap-2 bg-linear-to-b from-[#d6d6d6] to-[#d1d1d1] pr-[7px] pl-[11px]">
          <Dot />
          <h1 className="flex-1 pl-2.5 text-center font-bold">*New document 1 - Inkscape</h1>
          <Round label="Minimize"><path d="M1 3l3.500 3L8 3" /></Round>
          <Round label="Maximize"><path d="M1 6l3.500-3L8 6" /></Round>
          <Round label="Close"><path d="M1.500 1.500l6 6M7.500 1.500l-6 6" /></Round>
        </div>
        <nav className="flex h-[22px] shrink-0 items-center gap-3 bg-linear-to-b from-[#d1d1d1] to-[#c9c9c9] pt-0.5 pl-[7px]">
          {["File", "Edit", "View", "Layer", "Object", "Path", "Text", "Filters", "Extensions", "Help"].map((m) => (
            <button key={m} type="button">{m}</button>
          ))}
        </nav>
        <OptionsBar />
        <div className="flex min-h-0 flex-1">
          <div className="flex pr-px"><Column label="Tools" items={tools.map((t, i) => [t[0], t[1], i === 0])} /></div>
          <Editor />
          <div className="flex pl-px"><Column label="Commands" items={commands} /><Column label="Snapping" items={snaps} /></div>
        </div>
        <Palette />
        <StatusBar />
      </main>
      <Taskbar />
      <Dialog />
    </div>
  );
}
